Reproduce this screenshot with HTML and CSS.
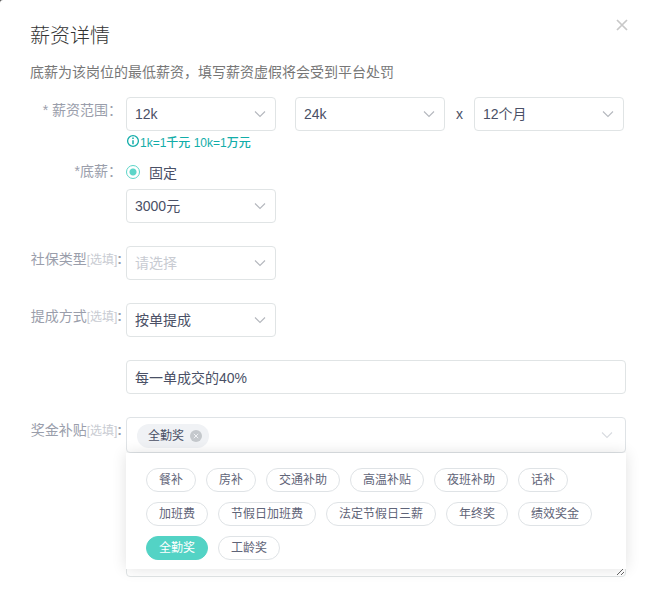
FILE: index.html
```html
<!DOCTYPE html>
<html lang="zh-CN">
<head>
    <meta charset="UTF-8">
    <meta name="viewport" content="width=device-width, initial-scale=1.0">
    <title>薪资详情</title>
    <link rel="stylesheet" href="styles.css">
</head>
<body>
    <svg class="sprite" aria-hidden="true">
        <symbol id="arrow" viewBox="0 0 12 8">
            <path d="M1 1.5l5 5 5-5" fill="none" stroke="currentColor" stroke-width="1.1"/>
        </symbol>
    </svg>

    <div class="dialog">
        <button type="button" class="close" aria-label="关闭">
            <svg width="12" height="12" viewBox="0 0 12 12"><path d="M1 1l10 10M11 1L1 11" fill="none" stroke="currentColor" stroke-width="1.7"/></svg>
        </button>
        <h1>薪资详情</h1>
        <p class="desc">底薪为该岗位的最低薪资，填写薪资虚假将会受到平台处罚</p>

        <form>
            <div class="form-item required">
                <label class="label" for="salaryMin">* 薪资范围：</label>
                <div class="content">
                    <div class="range">
                        <div class="select">
                            <select id="salaryMin"><option>12k</option></select>
                            <svg class="arrow"><use href="#arrow"/></svg>
                        </div>
                        <div class="select second">
                            <select id="salaryMax" aria-label="最高薪资"><option>24k</option></select>
                            <svg class="arrow"><use href="#arrow"/></svg>
                        </div>
                        <span class="times">x</span>
                        <div class="select">
                            <select id="months" aria-label="月数"><option>12个月</option></select>
                            <svg class="arrow"><use href="#arrow"/></svg>
                        </div>
                    </div>
                    <div class="hint">
                        <svg width="14" height="14" viewBox="0 0 14 14"><circle cx="7" cy="7" r="5.4" fill="none" stroke="currentColor" stroke-width="1.3"/><path d="M7 6.2v4M7 3.6v1.4" stroke="currentColor" stroke-width="1.5"/></svg>
                        <span>1k=1千元 10k=1万元</span>
                    </div>
                </div>
            </div>

            <div class="form-item">
                <label class="label" for="baseSalary">*底薪：</label>
                <div class="content">
                    <label class="radio"><input type="radio" name="baseType" checked>固定</label>
                    <div class="select">
                        <select id="baseSalary"><option>3000元</option></select>
                        <svg class="arrow"><use href="#arrow"/></svg>
                    </div>
                </div>
            </div>

            <div class="form-item">
                <label class="label" for="insurance">社保类型<small>[选填]</small><b>:</b></label>
                <div class="content">
                    <div class="select">
                        <select id="insurance" class="empty"><option>请选择</option></select>
                        <svg class="arrow"><use href="#arrow"/></svg>
                    </div>
                </div>
            </div>

            <div class="form-item">
                <label class="label" for="commission">提成方式<small>[选填]</small><b>:</b></label>
                <div class="content">
                    <div class="select">
                        <select id="commission"><option>按单提成</option></select>
                        <svg class="arrow"><use href="#arrow"/></svg>
                    </div>
                </div>
            </div>

            <div class="form-item">
                <div class="content">
                    <input type="text" class="text" aria-label="提成说明" value="每一单成交的40%">
                </div>
            </div>

            <div class="form-item">
                <span class="label" id="bonusLabel">奖金补贴<small>[选填]</small><b>:</b></span>
                <div class="content">
                    <div class="multi" role="group" aria-labelledby="bonusLabel">
                        <span class="tag">全勤奖
                            <button type="button" aria-label="移除全勤奖">
                                <svg width="12" height="12" viewBox="0 0 12 12"><circle cx="6" cy="6" r="6" fill="#c4c8cc"/><path d="M3.8 3.8l4.4 4.4M8.2 3.8L3.8 8.2" stroke="#f0f2f5"/></svg>
                            </button>
                        </span>
                        <svg class="arrow light"><use href="#arrow"/></svg>
                        <div class="dropdown">
                            <button type="button">餐补</button>
                            <button type="button">房补</button>
                            <button type="button">交通补助</button>
                            <button type="button">高温补贴</button>
                            <button type="button">夜班补助</button>
                            <button type="button">话补</button>
                            <button type="button">加班费</button>
                            <button type="button">节假日加班费</button>
                            <button type="button">法定节假日三薪</button>
                            <button type="button">年终奖</button>
                            <button type="button">绩效奖金</button>
                            <button type="button" class="active">全勤奖</button>
                            <button type="button">工龄奖</button>
                        </div>
                    </div>
                </div>
            </div>

            <div class="form-item">
                <div class="content">
                    <textarea aria-label="补充说明"></textarea>
                </div>
            </div>
        </form>
    </div>
</body>
</html>
```
FILE: styles.css
```css
* {
    box-sizing: border-box;
}
html {
    background-color: #555;
}
body {
    margin: 0;
    font-family: "Liberation Sans", "Noto Sans CJK SC", sans-serif;
    font-size: 14px;
    font-weight: 400;
    color: #4a5066;
}
button, input, select, textarea {
    font: inherit;
    color: inherit;
}
.sprite {
    position: absolute;
    width: 0;
    height: 0;
}
.dialog {
    position: relative;
    min-height: 100vh;
    padding: 22px 22px 14px 30px;
    background-color: #fff;
    border-top-left-radius: 3px;
}
.close {
    position: absolute;
    top: 19px;
    right: 20px;
    display: flex;
    padding: 0;
    border: none;
    background: none;
    color: #c8c8c8;
    cursor: pointer;
}
h1 {
    margin: 0 0 12px;
    font-size: 20px;
    font-weight: 300;
    line-height: 28px;
    color: #333;
}
.desc {
    margin: 0 0 15px;
    line-height: 20px;
    color: #777;
}
.form-item {
    display: grid;
    grid-template-columns: 92px 1fr;
    column-gap: 4px;
    margin-bottom: 23px;
}
.form-item.required {
    margin-bottom: 5px;
}
.label {
    line-height: 26px;
    text-align: right;
    white-space: nowrap;
    color: #9a9eab;
}
.label small {
    font-size: 12px;
    color: #c8cbd2;
}
.label b {
    font-weight: 700;
}
.content {
    grid-column: 2;
    min-width: 0;
}
.range {
    display: flex;
    align-items: center;
}
.select {
    position: relative;
    flex: 0 1 150px;
    max-width: 150px;
}
.second {
    margin-left: 19px;
}
.times {
    width: 29px;
    text-align: center;
}
select, .text, textarea {
    display: block;
    width: 100%;
    height: 34px;
    padding: 0 8px;
    border: 1px solid #e0e4e5;
    border-radius: 4px;
    background-color: #fff;
    outline: none;
}
select {
    appearance: none;
}
.empty {
    color: #c8cbd2;
}
.arrow {
    position: absolute;
    top: 13px;
    right: 10px;
    width: 12px;
    height: 8px;
    color: #b4b7bd;
    pointer-events: none;
}
.arrow.light {
    right: 12px;
    color: #d8dbe0;
}
.hint {
    display: flex;
    align-items: center;
    height: 20px;
    margin-bottom: 2px;
    font-size: 12px;
    font-weight: 500;
    color: #12ada9;
}
.radio {
    display: flex;
    align-items: center;
    gap: 9px;
    height: 28px;
    margin-bottom: 3px;
}
.radio input {
    appearance: none;
    width: 14px;
    height: 14px;
    margin: 0;
    border: 1px solid #5dd5c8;
    border-radius: 50%;
    background: radial-gradient(circle, #5dd5c8 3px, #fff 4px);
}
.multi {
    position: relative;
    display: flex;
    align-items: center;
    height: 36px;
    padding: 2px 10px 0;
    border: 1px solid #dfe3e6;
    border-radius: 4px;
}
.tag {
    display: flex;
    align-items: center;
    gap: 6px;
    height: 24px;
    padding: 0 7px 0 11px;
    border-radius: 12px;
    background-color: #f0f2f5;
    font-size: 12px;
    line-height: 20px;
}
.tag button {
    display: flex;
    padding: 0;
    border: none;
    background: none;
    cursor: pointer;
}
.dropdown {
    position: absolute;
    z-index: 1;
    top: calc(100% + 1px);
    left: -1px;
    right: -1px;
    display: flex;
    flex-wrap: wrap;
    gap: 10px;
    padding: 15px 20px 9px;
    background-color: #fff;
    box-shadow: 0 0 14px rgba(0,0,0,0.12);
}
.dropdown button {
    height: 24px;
    padding: 0 12px;
    border: 1px solid #dfe3e6;
    border-radius: 12px;
    background-color: #fff;
    font-size: 12px;
    line-height: 20px;
    color: #5f6478;
    cursor: pointer;
}
.dropdown button.active {
    border-color: #53d3c5;
    background-color: #53d3c5;
    color: #fff;
}
textarea {
    height: 101px;
    padding: 8px;
    resize: vertical;
}
form .form-item:last-child {
    margin-bottom: 0;
}
```
